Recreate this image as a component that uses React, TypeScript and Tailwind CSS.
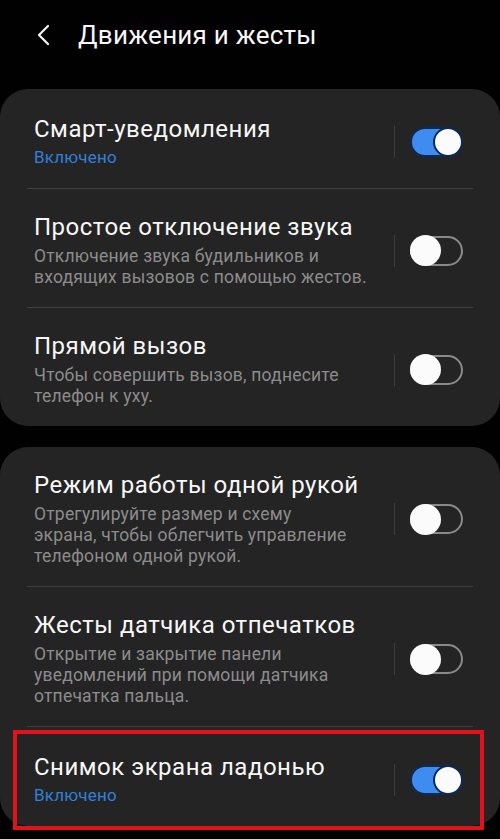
import React from 'react';

type Item = {
  title: string;
  sub?: string[];
  on?: boolean;
  status?: string;
  highlight?: boolean;
};

const groupA: Item[] = [
  { title: 'Смарт-уведомления', status: 'Включено', on: true },
  {
    title: 'Простое отключение звука',
    sub: ['Отключение звука будильников и', 'входящих вызовов с помощью жестов.'],
  },
  { title: 'Прямой вызов', sub: ['Чтобы совершить вызов, поднесите', 'телефон к уху.'] },
];

const groupB: Item[] = [
  {
    title: 'Режим работы одной рукой',
    sub: ['Отрегулируйте размер и схему', 'экрана, чтобы облегчить управление', 'телефоном одной рукой.'],
  },
  {
    title: 'Жесты датчика отпечатков',
    sub: ['Открытие и закрытие панели', 'уведомлений при помощи датчика', 'отпечатка пальца.'],
  },
  { title: 'Снимок экрана ладонью', status: 'Включено', on: true, highlight: true },
];

const Toggle = ({ on }: { on?: boolean }) =>
  on ? (
    <div className="w-[53px] h-[30px] rounded-full bg-[#3f8cf0] border-2 border-[#0d2a55] flex items-center justify-end">
      <div className="w-[30px] h-[30px] -mr-[2px] rounded-full bg-[#fbfbfb] border-2 border-[#0d2a55]" />
    </div>
  ) : (
    <div className="w-[53px] h-[30px] rounded-full border-2 border-[#8a8a8a] flex items-center">
      <div className="w-[31px] h-[31px] -ml-[2px] rounded-full bg-[#fbfbfb]" />
    </div>
  );

const Row = ({ item }: { item: Item }) => (
  <div
    className={`relative flex items-center pl-[34px] pr-[37px] ${item.status ? 'pt-[26px] pb-[20px]' : 'pt-[24px] pb-[19px]'}`}
  >
    {item.highlight && (
      <div className="absolute left-[13px] right-[16px] top-[3px] bottom-[-4px] border-[4px] border-[#e3111b]" />
    )}
    <div className="flex-1 flex flex-col">
      <div className="text-[24px] leading-[28px] tracking-[0.5px] text-[#f7f7f7]">{item.title}</div>
      {item.status && (
        <div className="mt-[4px] text-[17px] leading-[21px] tracking-[0.2px] text-[#3080da]">{item.status}</div>
      )}
      {item.sub && (
        <div className="mt-[5px] flex flex-col">
          {item.sub.map((s) => (
            <div key={s} className="text-[17.5px] leading-[21px] tracking-[0.2px] text-[#8c8c8c]">
              {s}
            </div>
          ))}
        </div>
      )}
    </div>
    <div className="w-px h-[32px] bg-[#3d3d3d] mr-[15px]" />
    <Toggle on={item.on} />
  </div>
);

const Card = ({ items }: { items: Item[] }) => (
  <div className="bg-[#242424] rounded-[28px]">
    {items.map((it, i) => (
      <React.Fragment key={it.title}>
        {i > 0 && <div className="mx-[27px] h-px bg-[#3f3f3f]" />}
        <Row item={it} />
      </React.Fragment>
    ))}
  </div>
);

export default function App() {
  return (
    <div
      className="w-[500px] h-[839px] bg-[#010101] overflow-hidden"
      style={{ fontFamily: 'Roboto, "Noto Sans", sans-serif' }}
    >
      <div className="h-[89px] flex items-start pt-[19px]">
        <svg width="16" height="22" viewBox="0 0 16 22" className="ml-[36px] mt-[5px]">
          <path d="M12 2 L3 11 L12 20" fill="none" stroke="#f5f5f5" strokeWidth="2.2" strokeLinecap="round" strokeLinejoin="round" />
        </svg>
        <div className="ml-[26px] text-[26px] leading-[32px] tracking-[0.25px] text-[#f7f7f7]">Движения и жесты</div>
      </div>
      <Card items={groupA} />
      <div className="h-[21px]" />
      <Card items={groupB} />
    </div>
  );
}
